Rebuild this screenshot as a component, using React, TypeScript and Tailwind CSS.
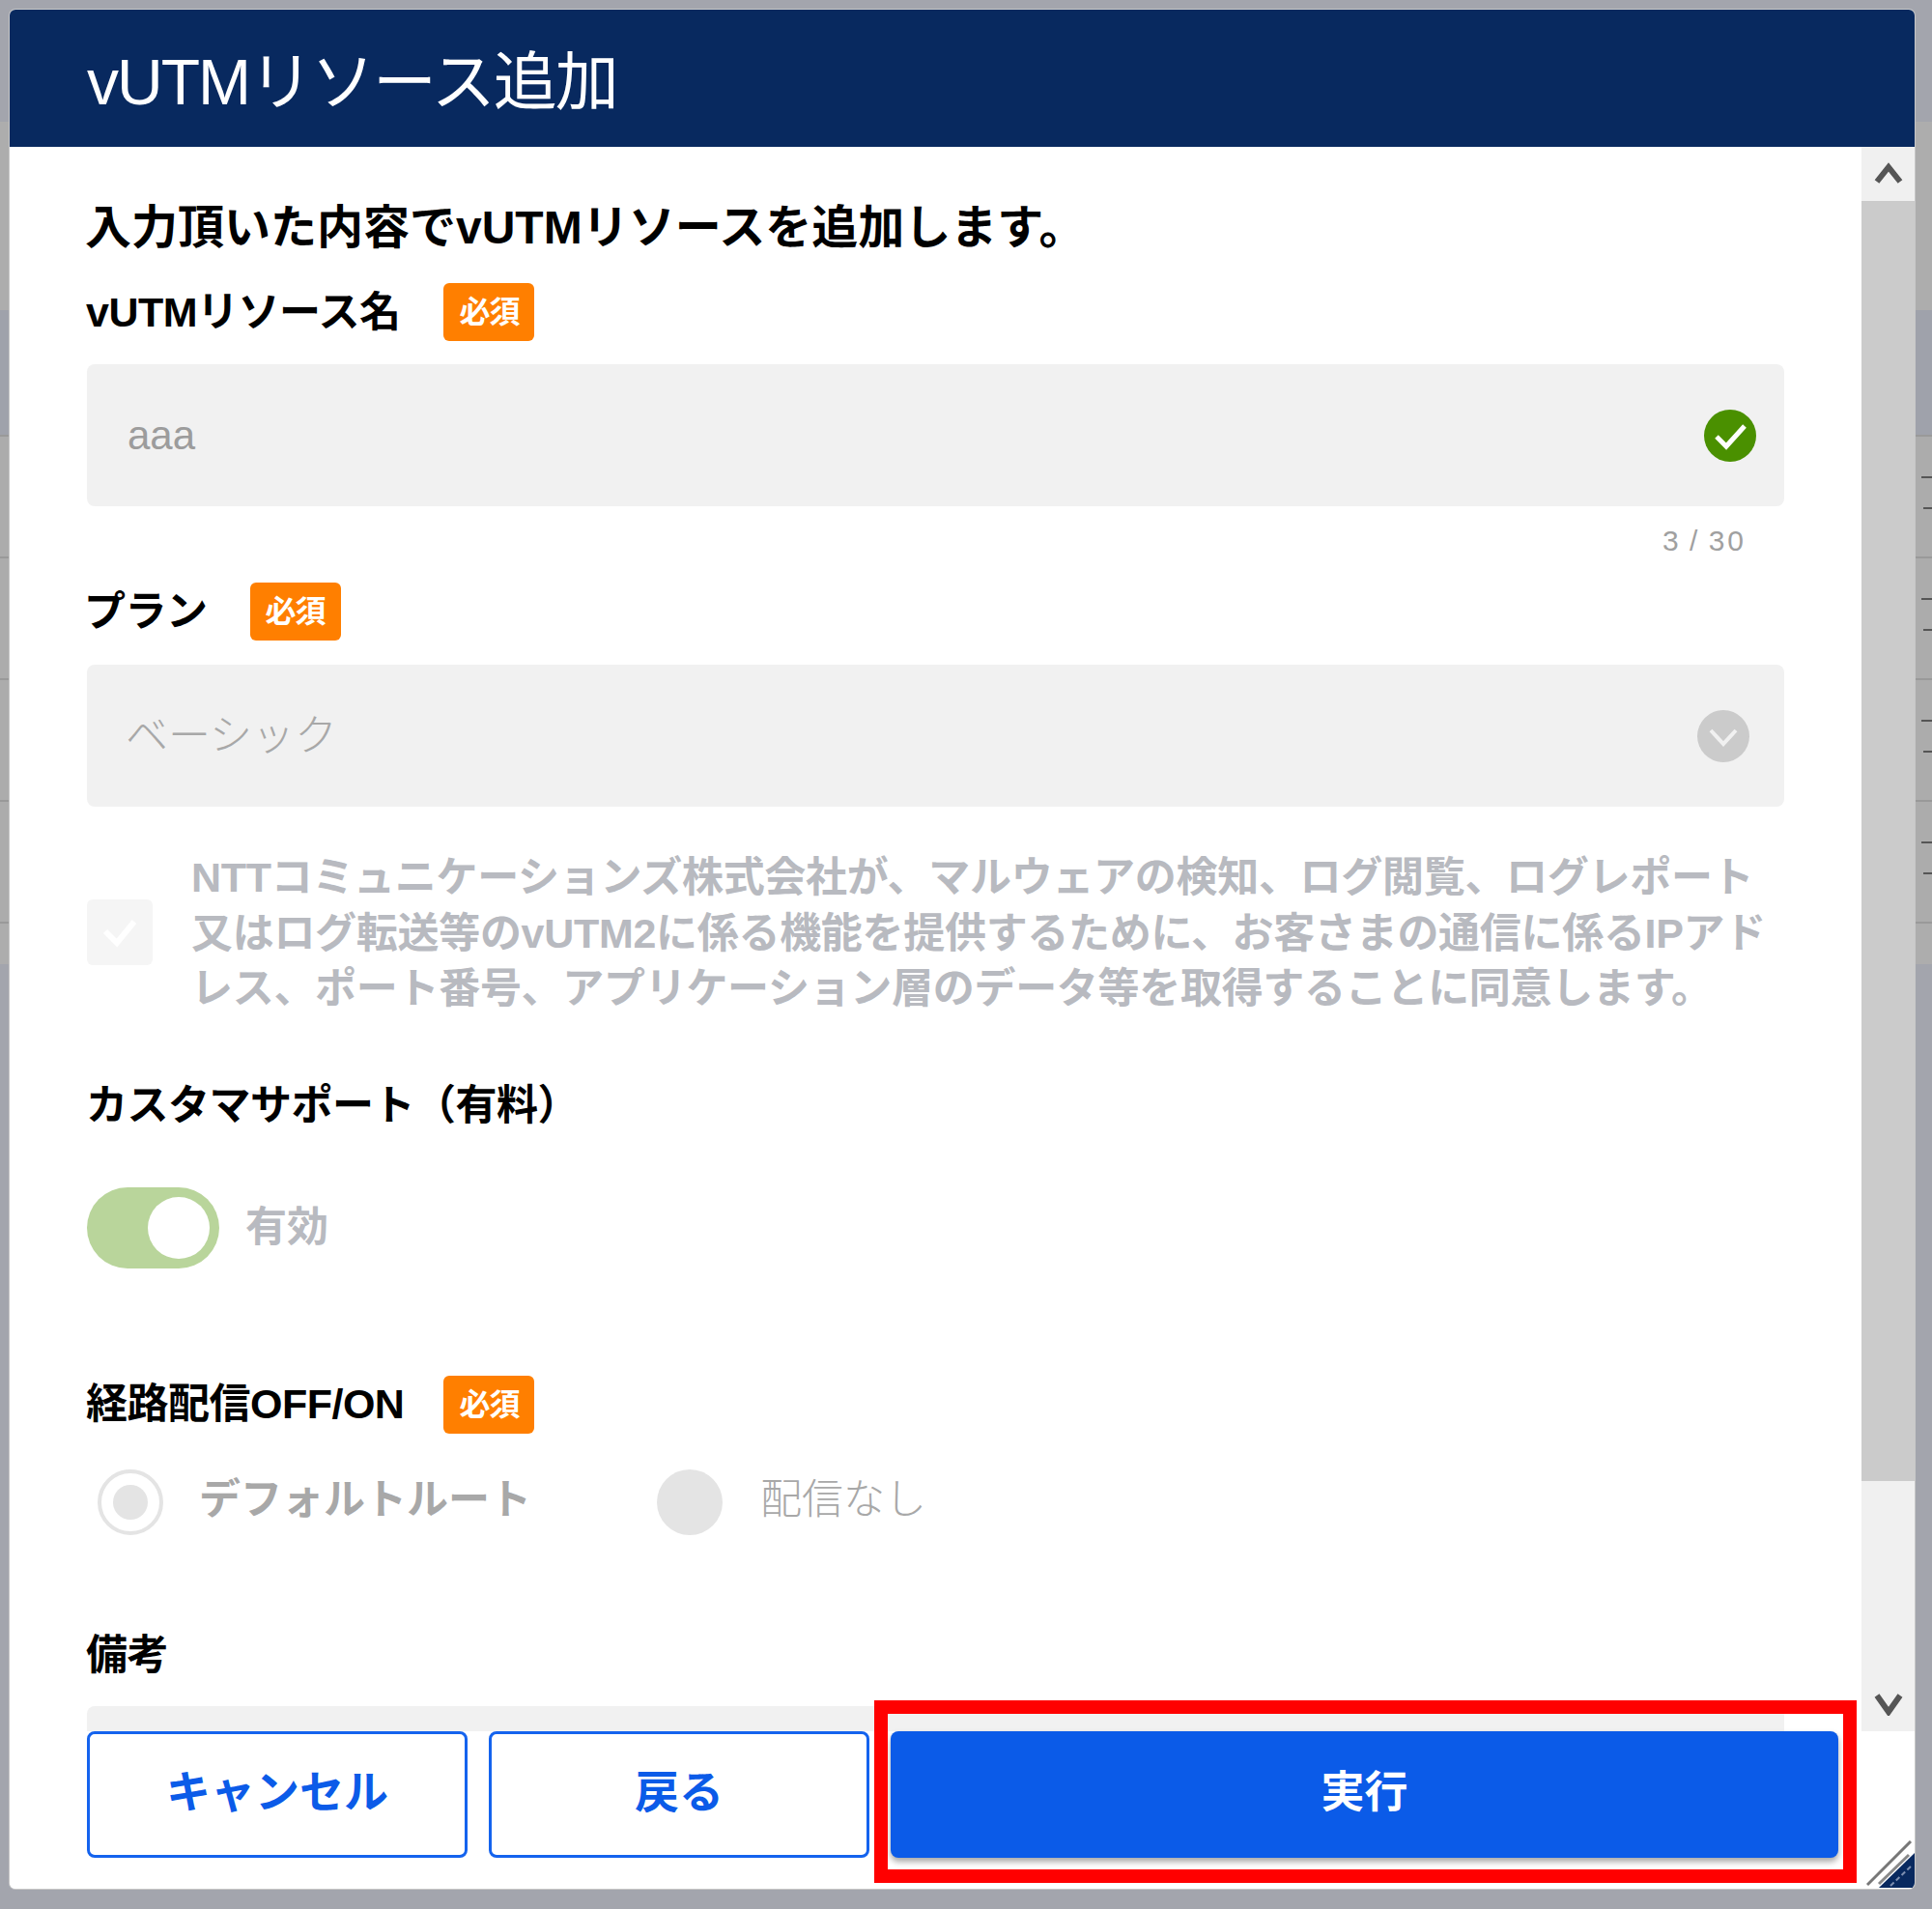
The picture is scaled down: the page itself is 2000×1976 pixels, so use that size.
const FONT = "font-['Liberation_Sans','Noto_Sans_CJK_JP',sans-serif]";

function RequiredBadge({ gap }: { gap: string }) {
  return (
    <span className={`${gap} flex h-[60px] w-[94px] items-center justify-center rounded-[6px] bg-[#ff7f00] text-[32px] font-bold tracking-[-1px] text-white`}>
      必須
    </span>
  );
}

function Label({ text, gap, className }: { text: string; gap?: string; className: string }) {
  return (
    <div className={`flex items-center ${className}`}>
      <span className="text-[43px] leading-none font-bold tracking-[-0.5px] text-black">{text}</span>
      {gap && <RequiredBadge gap={gap} />}
    </div>
  );
}

// One row of the table that is dimmed behind the dialog
function BackdropRow() {
  return (
    <div className="relative h-[126px] border-t-[2px] border-[#999999] bg-[#acacac]">
      <div className="absolute top-[41px] right-0 h-[2px] w-[11px] bg-[#555555]" />
      <div className="absolute top-[73px] right-0 h-[2px] w-[9px] bg-[#555555]" />
    </div>
  );
}

export default function App() {
  return (
    <div className={`${FONT} relative h-[1976px] w-[2000px] overflow-hidden bg-[#a3a5ad]`}>
      {/* Dimmed page behind the dialog */}
      <div className="h-[126px] bg-[#a3a5ad]" />
      <div className="h-[195px] bg-[#adadad]" />
      <div className="h-[129px] bg-[#9fa2ab]" />
      <BackdropRow />
      <BackdropRow />
      <BackdropRow />
      <BackdropRow />
      <div className="h-[44px] border-t-[2px] border-[#999999] bg-[#adadad]" />

      {/* Dialog */}
      <div className="absolute top-[10px] left-[10px] flex h-[1945px] w-[1972px] flex-col overflow-hidden rounded-[6px] bg-white shadow-[0_0_0_1px_#c8c8c8]">
        {/* Header */}
        <div className="flex h-[142px] shrink-0 items-center bg-[#08295f] pt-[8px] pl-[80px] text-[66px] font-normal tracking-[-2px] text-white">
          vUTMリソース追加
        </div>

        {/* Scrolling body */}
        <div className="flex min-h-0 flex-1">
          <div className="min-w-0 flex-1 overflow-hidden pt-[59px] pl-[80px]">
            <div className="-ml-[2px] text-[48px] leading-[50px] font-bold text-black">
              入力頂いた内容でvUTMリソースを追加します。
            </div>
            <Label text="vUTMリソース名" gap="ml-[45px]" className="mt-[32px] -ml-[1px] h-[60px]" />

            <div className="mt-[24px] flex h-[147px] w-[1757px] items-center justify-between rounded-[8px] bg-[#f1f1f1] pr-[29px] pl-[42px]">
              <span className="text-[42px] text-[#9c9c9c]">aaa</span>
              <svg width="54" height="54" viewBox="0 0 54 54">
                <circle cx="27" cy="27" r="27" fill="#4a9000" />
                <path d="M13 28l10 10 19-21" fill="none" stroke="#fff" strokeWidth="5" />
              </svg>
            </div>
            <div className="mt-[19px] w-[1718px] text-right text-[30px] leading-[34px] font-light tracking-[3px] text-[#a0a0a0] [word-spacing:-3px]">
              3 / 30
            </div>

            <Label text="プラン" gap="ml-[44px]" className="mt-[26px] -ml-[3px] h-[60px]" />

            <div className="mt-[25px] flex h-[147px] w-[1757px] items-center justify-between rounded-[8px] bg-[#f1f1f1] pr-[36px] pl-[40px]">
              <span className="text-[44px] font-light text-[#a8a8a8]">ベーシック</span>
              <svg width="54" height="54" viewBox="0 0 54 54">
                <circle cx="27" cy="27" r="27" fill="#cbcbcb" />
                <path d="M14 21l13 14 13-14" fill="none" stroke="#f1f1f1" strokeWidth="4" />
              </svg>
            </div>

            {/* Agreement */}
            <div className="mt-[42px] flex items-center">
              <div className="flex h-[68px] w-[68px] shrink-0 items-center justify-center rounded-[6px] bg-[#f5f5f5]">
                <svg width="40" height="32" viewBox="0 0 40 32">
                  <path d="M5 15l12 12L35 5" fill="none" stroke="#fff" strokeWidth="6" />
                </svg>
              </div>
              <p className="ml-[40px] pt-[3px] text-[43px] leading-[57.5px] font-bold tracking-[-0.3px] whitespace-nowrap text-[#b8bac0]">
                NTTコミュニケーションズ株式会社が、マルウェアの検知、ログ閲覧、ログレポート
                <br />
                又はログ転送等のvUTM2に係る機能を提供するために、お客さまの通信に係るIPアド
                <br />
                レス、ポート番号、アプリケーション層のデータ等を取得することに同意します。
              </p>
            </div>

            <Label text="カスタマサポート（有料）" className="mt-[67px] -ml-[1px] h-[50px]" />

            <div className="mt-[59px] flex items-center">
              <div className="flex h-[84px] w-[137px] items-center justify-end rounded-full bg-[#b9d59b] pr-[10px]">
                <div className="h-[64px] w-[64px] rounded-full bg-white" />
              </div>
              <span className="ml-[27px] text-[43px] font-bold text-[#b8bac0]">有効</span>
            </div>

            <Label text="経路配信OFF/ON" gap="ml-[41px]" className="mt-[111px] -ml-[1px] h-[60px]" />

            {/* Route radios */}
            <div className="mt-[37px] flex items-center pl-[11px]">
              <div className="flex h-[68px] w-[68px] items-center justify-center rounded-full border-[4px] border-[#e4e4e4]">
                <div className="h-[36px] w-[36px] rounded-full bg-[#e4e4e4]" />
              </div>
              <span className="-mt-[4px] ml-[37px] w-[474px] text-[43px] font-bold text-[#a8a8a8]">デフォルトルート</span>
              <div className="h-[68px] w-[68px] rounded-full bg-[#e4e4e4]" />
              <span className="-mt-[4px] ml-[39px] text-[43px] font-light text-[#a8a8a8]">配信なし</span>
            </div>

            <Label text="備考" className="mt-[100px] -ml-[1px] h-[50px]" />
            <div className="mt-[27px] h-[100px] w-[1757px] rounded-[8px] bg-[#f1f1f1]" />
          </div>

          {/* Scrollbar */}
          <div className="flex w-[55px] shrink-0 flex-col bg-[#f0f0f0]">
            <div className="flex h-[56px] items-center justify-center">
              <svg width="32" height="24" viewBox="0 0 32 24">
                <path d="M4 20L16 5l12 15" fill="none" stroke="#555555" strokeWidth="6" />
              </svg>
            </div>
            <div className="h-[1325px] bg-[#cbcbcb]" />
            <div className="flex flex-1 items-end justify-center pb-[16px]">
              <svg width="32" height="24" viewBox="0 0 32 24">
                <path d="M4 3l12 17L28 3" fill="none" stroke="#555555" strokeWidth="6" />
              </svg>
            </div>
          </div>
        </div>

        {/* Footer */}
        <div className="flex h-[163px] shrink-0 gap-[22px] bg-white pl-[80px]">
          <button className="h-[131px] w-[394px] rounded-[8px] border-[3px] border-[#1463ee] pb-[4px] text-[46px] font-bold text-[#0b5be8]">
            キャンセル
          </button>
          <button className="h-[131px] w-[394px] rounded-[8px] border-[3px] border-[#1463ee] pb-[4px] text-[46px] font-bold text-[#0b5be8]">
            戻る
          </button>
          <button className="h-[131px] w-[981px] rounded-[8px] bg-[#0b5be8] pb-[4px] text-[45px] font-bold text-white shadow-[0_4px_6px_rgba(0,0,0,0.35)]">
            実行
          </button>
        </div>

        {/* Resize grip */}
        <svg className="absolute right-0 bottom-0" width="50" height="50" viewBox="0 0 50 50">
          <path d="M1 46L46 1" stroke="#777777" strokeWidth="3" />
          <path d="M13 49L50 13V49Z" fill="#08295f" />
          <path d="M13 45L44 15" stroke="#888888" strokeWidth="3" />
          <path d="M25 47L48 25" stroke="#7d8fb0" strokeWidth="2" strokeDasharray="5 3" />
        </svg>

        {/* Red annotation box */}
        <div className="absolute top-[1750px] left-[895px] h-[189px] w-[1017px] border-[14px] border-[#ff0000]" />
      </div>
    </div>
  );
}
